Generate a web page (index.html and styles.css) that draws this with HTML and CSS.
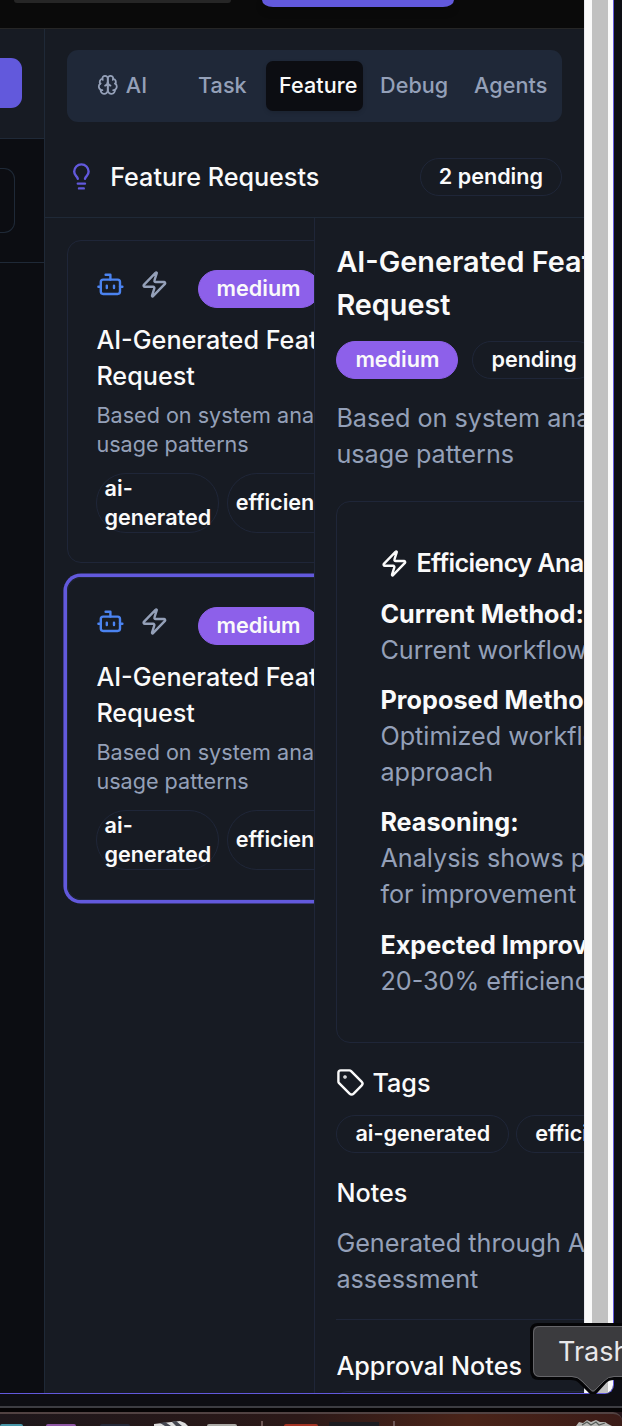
FILE: index.html
```html
<!DOCTYPE html>
<html lang="en">
<head>
<meta charset="utf-8">
<title>Feature Requests</title>
<link rel="stylesheet" href="styles.css">
</head>
<body>
<svg class="defs" aria-hidden="true">
  <symbol id="zap" viewBox="0 0 24 24"><path d="M4 14a1 1 0 0 1-.78-1.63l9.9-10.2a.5.5 0 0 1 .86.46l-1.92 6.02A1 1 0 0 0 13 10h7a1 1 0 0 1 .78 1.63l-9.9 10.2a.5.5 0 0 1-.86-.46l1.92-6.02A1 1 0 0 0 11 14z"/></symbol>
  <symbol id="bot" viewBox="0 0 24 24"><path d="M12 8V4H8"/><rect width="16" height="12" x="4" y="8" rx="2"/><path d="M2 14h2M20 14h2M15 13v2M9 13v2"/></symbol>
  <symbol id="bulb" viewBox="0 0 24 24"><path d="M15 14c.2-1 .7-1.7 1.5-2.5 1-.9 1.5-2.2 1.5-3.5A6 6 0 0 0 6 8c0 1 .2 2.2 1.5 3.5.7.7 1.3 1.5 1.5 2.5M9 18h6M10 22h4"/></symbol>
  <symbol id="tag" viewBox="0 0 24 24"><path d="M12.586 2.586A2 2 0 0 0 11.172 2H4a2 2 0 0 0-2 2v7.172a2 2 0 0 0 .586 1.414l8.704 8.704a2.426 2.426 0 0 0 3.42 0l6.58-6.58a2.426 2.426 0 0 0 0-3.42z"/><circle cx="7.5" cy="7.5" r=".5" fill="currentColor"/></symbol>
  <symbol id="brain" viewBox="0 0 24 24"><path d="M12 5a3 3 0 1 0-5.997.125 4 4 0 0 0-2.526 5.77 4 4 0 0 0 .556 6.588A4 4 0 1 0 12 18Z"/><path d="M12 5a3 3 0 1 1 5.997.125 4 4 0 0 1 2.526 5.77 4 4 0 0 1-.556 6.588A4 4 0 1 1 12 18Z"/><path d="M15 13a4.5 4.5 0 0 1-3-4 4.5 4.5 0 0 1-3 4M17.599 6.5a3 3 0 0 0 .399-1.375M6.003 5.125A3 3 0 0 0 6.401 6.5M3.477 10.896a4 4 0 0 1 .585-.396M19.938 10.5a4 4 0 0 1 .585.396M6 18a4 4 0 0 1-1.967-.516M19.967 17.484A4 4 0 0 1 18 18"/></symbol>
</svg>
<div class="screen">
  <div class="window">
    <div class="page">
      <header class="topbar"><div class="search"></div><div class="action"></div></header>
      <div class="workspace">
        <aside class="side">
          <div class="side-head"><div class="side-button"></div></div>
          <div class="side-filter"><div class="side-input"></div></div>
        </aside>
        <main class="panel">
          <nav class="tabs">
            <span class="tab tab-ai"><svg class="icon icon-xs"><use href="#brain"/></svg>AI</span>
            <span class="tab tab-task">Task</span>
            <span class="tab active">Feature</span>
            <span class="tab tab-debug">Debug</span>
            <span class="tab tab-agents">Agents</span>
          </nav>
          <div class="panel-head">
            <svg class="icon bulb"><use href="#bulb"/></svg>
            <h2 class="panel-title">Feature Requests</h2>
            <span class="badge">2 pending</span>
          </div>
          <div class="columns">
            <section class="list">
              <article class="card">
                <div class="card-icons"><svg class="icon bot"><use href="#bot"/></svg><svg class="icon muted"><use href="#zap"/></svg><span class="badge medium card-badge">medium</span></div>
                <h3 class="card-title">AI-Generated Feature<br>Request</h3>
                <p class="card-text">Based on system analysis and<br>usage patterns</p>
                <div class="chips"><span class="chip">ai-<br>generated</span><span class="chip">efficiency</span></div>
              </article>
              <article class="card selected">
                <div class="card-icons"><svg class="icon bot"><use href="#bot"/></svg><svg class="icon muted"><use href="#zap"/></svg><span class="badge medium card-badge">medium</span></div>
                <h3 class="card-title">AI-Generated Feature<br>Request</h3>
                <p class="card-text">Based on system analysis and<br>usage patterns</p>
                <div class="chips"><span class="chip">ai-<br>generated</span><span class="chip">efficiency</span></div>
              </article>
            </section>
            <section class="detail">
              <h2 class="detail-title">AI-Generated Feature<br>Request</h2>
              <div class="status"><span class="badge medium">medium</span><span class="badge">pending</span></div>
              <p class="detail-text">Based on system analysis and<br>usage patterns</p>
              <div class="analysis">
                <h4 class="analysis-title"><svg class="icon"><use href="#zap"/></svg>Efficiency Analysis</h4>
                <div><b>Current Method:</b><p>Current workflow</p></div>
                <div><b class="proposed">Proposed Method:</b><p>Optimized workflow<br>approach</p></div>
                <div><b>Reasoning:</b><p>Analysis shows potential<br>for improvement</p></div>
                <div><b>Expected Improvement:</b><p>20-30% efficiency gain</p></div>
              </div>
              <h4 class="heading tags-heading"><svg class="icon"><use href="#tag"/></svg>Tags</h4>
              <div class="tag-row"><span class="badge">ai-generated</span><span class="badge">efficiency</span></div>
              <h4 class="heading notes-heading">Notes</h4>
              <p class="notes">Generated through AI<br>assessment</p>
              <div class="approval"><h4 class="heading">Approval Notes</h4><div class="approval-input"></div></div>
            </section>
          </div>
        </main>
      </div>
    </div>
    <div class="scrollbar"><div class="thumb"></div></div>
  </div>
  <footer class="desktop">
    <div class="dock">
      <i class="app cyan"></i><i class="app purple"></i><i class="app navy"></i>
      <svg class="clapper" viewBox="0 0 34 5"><path d="M0 5V3L26 0l5 2 3 3z" fill="#ddd"/><path d="M6 2l5-1 6 4h-6zM18 1l4-1 6 5h-6z" fill="#444650"/></svg>
      <i class="app pale"></i><i class="split"></i><i class="app red"></i><i class="app black"></i><i class="split second"></i>
      <svg class="bin" viewBox="0 0 36 6"><path d="M0 6l3-4 4 1 4-3 4 2 5-2 4 2 5 0 3 2 4 2z" fill="#b9b9b6"/><path d="M6 5l5-3 4 3 5-3 3 3 6-2" fill="none" stroke="#555b57" stroke-width="1.3"/></svg>
    </div>
  </footer>
  <div class="tooltip">
    <svg class="bubble" viewBox="0 0 94 72"><path d="M99 2.500H9Q2.500 2.500 2.500 9V48Q2.500 56.500 10 56.500H42Q48 56.500 51 60L61 70Q64 73 67 70L76 60Q79 56.500 85 56.500H99Z" fill="#3b3b3e" stroke="#050507" stroke-width="3"/><path d="M99 4.500H11Q4.500 4.500 4.500 11V47Q4.500 54.500 11 54.500H43Q49 54.500 53 59L62 68Q64 70 66 68L75 59Q79 54.500 85 54.500H99" fill="none" stroke="#66666a"/></svg>
    <span class="tooltip-text">Trash</span>
  </div>
</div>
</body>
</html>
```
FILE: styles.css
```css
* { box-sizing: border-box; margin: 0; padding: 0; }
body { width: 622px; height: 1426px; overflow: hidden; background: #0d0e14; color: #fafafa; font-family: Inter, sans-serif; }
h2, h3, h4 { font-weight: 500; }
.defs { position: absolute; width: 0; height: 0; }
.screen { position: relative; width: 622px; height: 1426px; overflow: hidden; display: flex; flex-direction: column; }
.window { display: flex; width: 614px; height: 1394px; flex: none; overflow: hidden; border-right: 1px solid #6259dc; border-bottom: 1px solid #6259dc; border-bottom-right-radius: 9px; }
.page { width: 584px; flex: none; overflow: hidden; display: flex; flex-direction: column; }
.scrollbar { flex: 1; background: #fafafa; padding: 0 5px 0 7px; border-left: 1px solid #e9e9ee; }
.thumb { height: 100%; background: #c1c1c1; }

.topbar { height: 29px; flex: none; display: flex; align-items: flex-start; background: #0a0a0a; border-bottom: 1px solid #262626; }
.search { width: 217px; height: 3px; margin-left: 14px; background: #262626; border-radius: 0 0 14px 14px; }
.action { width: 192px; height: 7px; margin-left: 31px; background: #6259dc; border-radius: 0 0 11px 11px / 0 0 7px 7px; box-shadow: 0 4px 8px #0003; }
.workspace { flex: 1; min-height: 0; display: flex; }

.side { width: 45px; flex: none; border-right: 1px solid #1f2937; background: #0c0d12; }
.side-head { height: 110px; padding-top: 29px; background: #171b23; border-bottom: 1px solid #1f2937; }
.side-button { width: 22px; height: 50px; background: #6259dc; border-radius: 0 11px 11px 0; }
.side-filter { height: 124px; padding-top: 29px; border-bottom: 1px solid #1f2937; }
.side-input { width: 15px; height: 65px; border: 1px solid #1f2937; border-left: 0; border-radius: 0 11px 11px 0; }

.panel { width: 539px; display: flex; flex-direction: column; background: #171b23; overflow: hidden; }
.tabs { width: 495px; height: 72px; margin: 21px 22px 0; padding: 0 9px 0 10px; display: flex; align-items: center; background: #1f2838; border-radius: 11px; flex: none; }
.tab { height: 50px; padding-bottom: 2px; display: flex; align-items: center; font-size: 21.600px; font-weight: 500; color: #94a0b8; letter-spacing: .06px; white-space: nowrap; flex: none; }
.tab-ai { width: 102px; padding-left: 20px; gap: 7.200px; }
.tab-task { width: 87px; padding-left: 19px; }
.active { width: 97px; padding-left: 13px; color: #fafafa; background: #0c0d12; border-radius: 7px; box-shadow: 0 2px 4px #0002; }
.tab-debug { width: 94px; padding-left: 17px; }
.tab-agents { width: 95px; padding-left: 17px; }

.icon { width: 28.800px; height: 28.800px; flex: none; fill: none; stroke: currentColor; stroke-width: 2; stroke-linecap: round; stroke-linejoin: round; }
.icon-xs { width: 21.600px; height: 21.600px; }
.bulb { color: #6259dc; margin-right: 14.400px; transform: translateY(-1px); }
.bot { color: #4b83f0; }
.muted { color: #94a0b8; }

.panel-head { height: 96px; flex: none; padding: 15px 22px 0; display: flex; align-items: center; border-bottom: 1px solid #1f2937; }
.panel-title { font-size: 25.200px; line-height: 36px; flex: 1; letter-spacing: -.03px; }
.badge { height: 38px; padding: 0 18px 1px; display: inline-flex; align-items: center; flex: none; border: 1px solid #1f2638; border-radius: 19px; font-size: 21.600px; line-height: 28.800px; font-weight: 600; white-space: nowrap; }
.medium { background: #8d60ea; border-color: #8d60ea; }

.columns { flex: 1; display: flex; min-height: 0; }
.list { width: 270px; flex: none; padding: 22px; border-right: 1px solid #1f2638; overflow: hidden; display: flex; flex-direction: column; gap: 14px; }
.card { width: 400px; height: 323px; flex: none; padding: 29px 28.400px; border: 1px solid #1f2638; border-radius: 14px; white-space: nowrap; }
.selected { box-shadow: 0 0 0 3.600px #6259dc; }
.card-icons { display: flex; align-items: flex-start; height: 38px; gap: 14.400px; }
.card-badge { margin-left: 15.400px; padding-left: 17.400px; }
.card-title { margin-top: 14.400px; font-size: 25.200px; line-height: 36px; }
.card-text { margin-top: 6.400px; font-size: 21.600px; line-height: 28.800px; color: #94a0b8; }
.chips { margin-top: 14.400px; display: flex; gap: 8px; }
.chip { height: 60px; display: flex; align-items: center; padding: 0 7.200px; border: 1px solid #1f2638; border-radius: 30px; font-size: 21.600px; line-height: 28.800px; font-weight: 600; }

.detail { width: 480px; flex: none; padding: 22px 21.400px; white-space: nowrap; font-size: 25.200px; line-height: 36px; }
.detail-title { font-size: 28.800px; line-height: 43.200px; font-weight: 600; }
.status { display: flex; gap: 14px; margin-top: 14.400px; }
.detail-text { margin-top: 21.600px; color: #94a0b8; }
.analysis { margin-top: 28.800px; height: 542px; padding: 43px; border: 1px solid #1f2638; border-radius: 14px; display: flex; flex-direction: column; gap: 14.400px; }
.analysis-title { display: flex; align-items: center; gap: 7.200px; font-size: 25.200px; font-weight: 600; letter-spacing: -.6px; }
.analysis b { display: block; font-weight: 700; }
.analysis .proposed { letter-spacing: .06px; }
.analysis p, .notes { color: #94a0b8; }
.heading { font-size: 25.200px; }
.tags-heading { margin-top: 21.600px; display: flex; align-items: center; gap: 7.200px; }
.tag-row { margin-top: 14.400px; display: flex; gap: 7px; }
.notes-heading { margin-top: 21.600px; }
.notes { margin-top: 14.400px; }
.approval { margin-top: 21.600px; padding-top: 28px; border-top: 1px solid #1f2638; }
.approval-input { margin-top: 7.200px; height: 80px; border: 1px solid #1f2638; border-radius: 11px; }

.desktop { height: 32px; flex: none; border-top: 12px solid #0e0e13; background: linear-gradient(#3d3d42 2px, #050304 2px 6px, #241519 6px); }
.dock { height: 14px; margin-top: 6px; border-top: 2px solid #514242; background: linear-gradient(90deg, #1e171b, #2c1918 48%, #4a2419 75%, #3b1c18); display: flex; align-items: flex-end; overflow: hidden; border-top-right-radius: 9px; }
.app { width: 30px; height: 2px; border-radius: 5px 5px 0 0; flex: none; }
.cyan { width: 23px; background: #4796a8; }
.purple { margin-left: 23px; background: #8e56a4; }
.navy { margin-left: 24px; background: #252939; }
.clapper { width: 34px; height: 5px; margin-left: 24px; flex: none; }
.pale { margin-left: 19px; background: #aaa9a5; }
.split { width: 2px; height: 5px; margin-left: 24px; background: #6d5655; flex: none; }
.red { width: 34px; margin-left: 21px; background: #a43323; }
.black { width: 50px; height: 4px; margin-left: 11px; background: #1d1c21; border-radius: 0; }
.second { margin-left: 14px; }
.bin { width: 36px; height: 6px; margin-left: 181px; flex: none; }

.tooltip { position: absolute; left: 529px; top: 1322px; width: 94px; height: 72px; }
.bubble { position: absolute; left: 0; top: 0; width: 94px; height: 72px; }
.tooltip-text { position: absolute; left: 29px; top: 11px; font-size: 27px; line-height: 38px; color: #e8e8ea; }
```
